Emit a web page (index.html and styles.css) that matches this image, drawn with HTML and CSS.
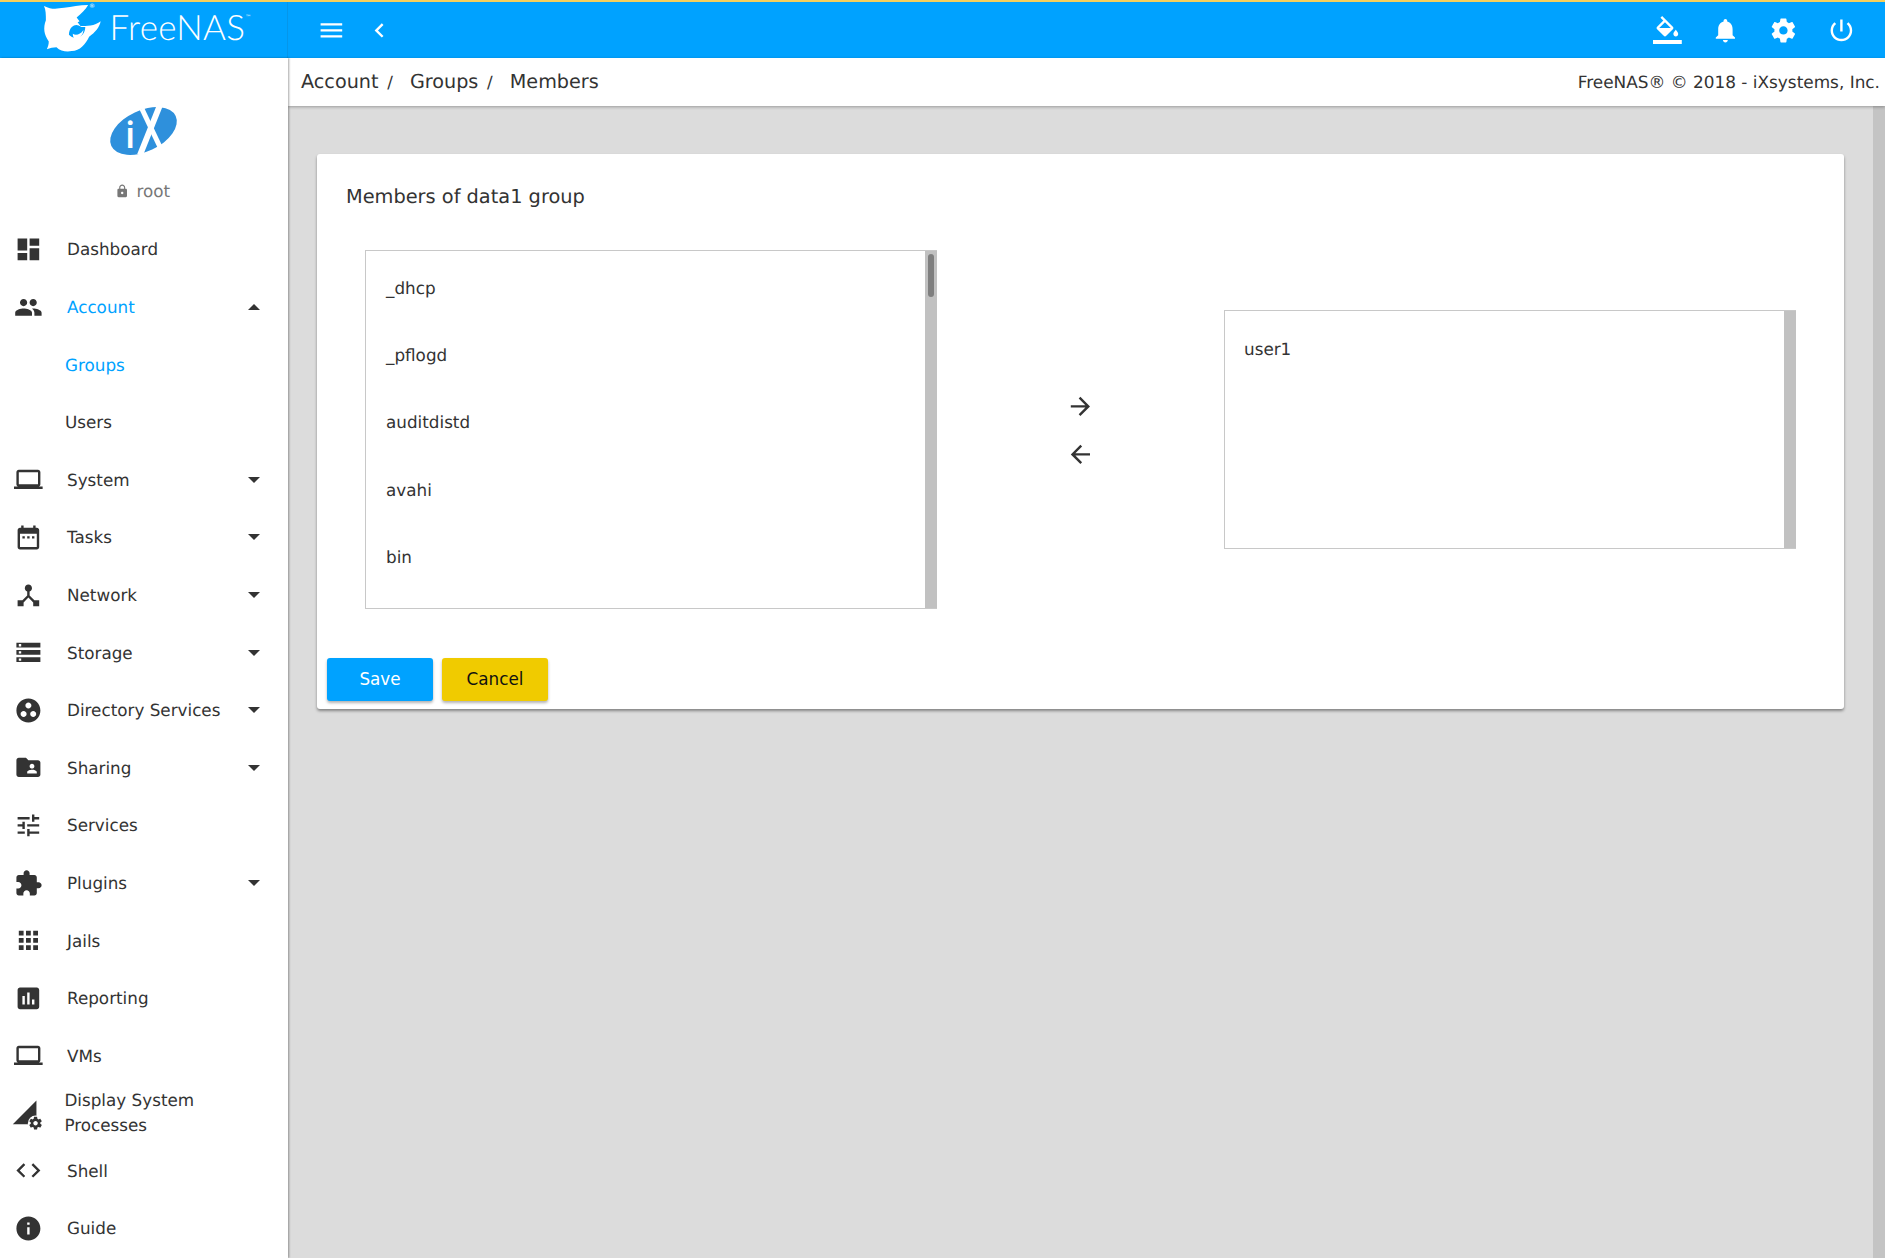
FILE: index.html
```html
<!doctype html>
<html>
<head>
    <meta charset="utf-8">
    <title>FreeNAS - Members</title>
    <link rel="stylesheet" href="styles.css">
</head>
<body>

<svg class="sprite" xmlns="http://www.w3.org/2000/svg">
    <symbol id="i-dashboard" viewBox="0 0 24 24"><path d="M3 13h8V3H3v10zm0 8h8v-6H3v6zm10 0h8V11h-8v10zm0-18v6h8V3h-8z"/></symbol>
    <symbol id="i-group" viewBox="0 0 24 24"><path d="M16 11c1.66 0 2.99-1.34 2.99-3S17.66 5 16 5c-1.66 0-3 1.34-3 3s1.34 3 3 3zm-8 0c1.66 0 2.99-1.34 2.99-3S9.66 5 8 5C6.34 5 5 6.34 5 8s1.34 3 3 3zm0 2c-2.33 0-7 1.17-7 3.5V19h14v-2.5c0-2.33-4.67-3.5-7-3.5zm8 0c-.29 0-.62.02-.97.05 1.16.84 1.97 1.97 1.97 3.45V19h6v-2.5c0-2.33-4.67-3.5-7-3.5z"/></symbol>
    <symbol id="i-laptop" viewBox="0 0 24 24"><path d="M20 18c1.1 0 1.99-.9 1.99-2L22 6c0-1.1-.9-2-2-2H4c-1.1 0-2 .9-2 2v10c0 1.1.9 2 2 2H0v2h24v-2h-4zM4 6h16v10H4V6z"/></symbol>
    <symbol id="i-date" viewBox="0 0 24 24"><path d="M9 11H7v2h2v-2zm4 0h-2v2h2v-2zm4 0h-2v2h2v-2zm2-7h-1V2h-2v2H8V2H6v2H5c-1.11 0-1.99.9-1.99 2L3 20c0 1.1.89 2 2 2h14c1.1 0 2-.9 2-2V6c0-1.1-.9-2-2-2zm0 16H5V9h14v11z"/></symbol>
    <symbol id="i-hub" viewBox="0 0 24 24"><path d="M17 16l-4-4V8.82C14.16 8.4 15 7.3 15 6c0-1.66-1.34-3-3-3S9 4.34 9 6c0 1.3.84 2.4 2 2.82V12l-4 4H3v5h5v-3.05l4-4.2 4 4.2V21h5v-5h-4z"/></symbol>
    <symbol id="i-storage" viewBox="0 0 24 24"><path d="M2 20h20v-4H2v4zm2-3h2v2H4v-2zM2 4v4h20V4H2zm4 3H4V5h2v2zm-4 7h20v-4H2v4zm2-3h2v2H4v-2z"/></symbol>
    <symbol id="i-groupwork" viewBox="0 0 24 24"><path d="M12 2C6.48 2 2 6.48 2 12s4.48 10 10 10 10-4.48 10-10S17.52 2 12 2zM8 17.5c-1.38 0-2.5-1.12-2.5-2.5s1.12-2.5 2.5-2.5 2.5 1.12 2.5 2.5-1.12 2.5-2.5 2.5zM9.5 8c0-1.38 1.12-2.5 2.5-2.5s2.5 1.12 2.5 2.5-1.12 2.5-2.5 2.5S9.5 9.38 9.5 8zm6.5 9.5c-1.38 0-2.5-1.12-2.5-2.5s1.12-2.5 2.5-2.5 2.5 1.12 2.5 2.5-1.12 2.5-2.5 2.5z"/></symbol>
    <symbol id="i-folder" viewBox="0 0 24 24"><path d="M20 6h-8l-2-2H4c-1.1 0-1.99.9-1.99 2L2 18c0 1.1.9 2 2 2h16c1.1 0 2-.9 2-2V8c0-1.1-.9-2-2-2zm-5 3c1.1 0 2 .9 2 2s-.9 2-2 2-2-.9-2-2 .9-2 2-2zm4 8h-8v-1c0-1.33 2.67-2 4-2s4 .67 4 2v1z"/></symbol>
    <symbol id="i-tune" viewBox="0 0 24 24"><path d="M3 17v2h6v-2H3zM3 5v2h10V5H3zm10 16v-2h8v-2h-8v-2h-2v6h2zM7 9v2H3v2h4v2h2V9H7zm14 4v-2H11v2h10zm-6-4h2V7h4V5h-4V3h-2v6z"/></symbol>
    <symbol id="i-extension" viewBox="0 0 24 24"><path d="M20.5 11H19V7c0-1.1-.9-2-2-2h-4V3.5C13 2.12 11.88 1 10.5 1S8 2.12 8 3.5V5H4c-1.1 0-1.99.9-1.99 2v3.8H3.5c1.49 0 2.7 1.21 2.7 2.7s-1.21 2.7-2.7 2.7H2V20c0 1.1.9 2 2 2h3.8v-1.5c0-1.49 1.21-2.7 2.7-2.7 1.49 0 2.7 1.21 2.7 2.7V22H17c1.1 0 2-.9 2-2v-4h1.5c1.38 0 2.5-1.12 2.5-2.5S21.88 11 20.5 11z"/></symbol>
    <symbol id="i-apps" viewBox="0 0 24 24"><path d="M4 8h4V4H4v4zm6 12h4v-4h-4v4zm-6 0h4v-4H4v4zm0-6h4v-4H4v4zm6 0h4v-4h-4v4zm6-10v4h4V4h-4zm-6 4h4V4h-4v4zm6 6h4v-4h-4v4zm0 6h4v-4h-4v4z"/></symbol>
    <symbol id="i-assessment" viewBox="0 0 24 24"><path d="M19 3H5c-1.1 0-2 .9-2 2v14c0 1.1.9 2 2 2h14c1.1 0 2-.9 2-2V5c0-1.1-.9-2-2-2zM9 17H7v-7h2v7zm4 0h-2V7h2v10zm4 0h-2v-4h2v4z"/></symbol>
    <symbol id="i-settings" viewBox="0 0 24 24"><path d="M19.43 12.98c.04-.32.07-.64.07-.98s-.03-.66-.07-.98l2.11-1.65c.19-.15.24-.42.12-.64l-2-3.46c-.12-.22-.39-.3-.61-.22l-2.49 1c-.52-.4-1.08-.73-1.69-.98l-.38-2.65C14.46 2.18 14.25 2 14 2h-4c-.25 0-.46.18-.49.42l-.38 2.65c-.61.25-1.17.59-1.69.98l-2.49-1c-.23-.09-.49 0-.61.22l-2 3.46c-.13.22-.07.49.12.64l2.11 1.65c-.04.32-.07.65-.07.98s.03.66.07.98l-2.11 1.65c-.19.15-.24.42-.12.64l2 3.46c.12.22.39.3.61.22l2.49-1c.52.4 1.08.73 1.69.98l.38 2.65c.03.24.24.42.49.42h4c.25 0 .46-.18.49-.42l.38-2.65c.61-.25 1.17-.59 1.69-.98l2.49 1c.23.09.49 0 .61-.22l2-3.46c.12-.22.07-.49-.12-.64l-2.11-1.65zM12 15.5c-1.93 0-3.5-1.57-3.5-3.5s1.57-3.5 3.5-3.5 3.5 1.57 3.5 3.5-1.57 3.5-3.5 3.5z"/></symbol>
    <symbol id="i-processes" viewBox="0 0 24 24" overflow="visible">
        <path d="M-1 21 18.7 1.2V21z"/>
        <circle cx="18" cy="20.2" r="6.4" fill="#fff"/>
        <g transform="translate(11.6 13.8) scale(.53)"><path d="M19.43 12.98c.04-.32.07-.64.07-.98s-.03-.66-.07-.98l2.11-1.65c.19-.15.24-.42.12-.64l-2-3.46c-.12-.22-.39-.3-.61-.22l-2.49 1c-.52-.4-1.08-.73-1.69-.98l-.38-2.65C14.46 2.18 14.25 2 14 2h-4c-.25 0-.46.18-.49.42l-.38 2.65c-.61.25-1.17.59-1.69.98l-2.49-1c-.23-.09-.49 0-.61.22l-2 3.46c-.13.22-.07.49.12.64l2.11 1.65c-.04.32-.07.65-.07.98s.03.66.07.98l-2.11 1.65c-.19.15-.24.42-.12.64l2 3.46c.12.22.39.3.61.22l2.49-1c.52.4 1.08.73 1.69.98l.38 2.65c.03.24.24.42.49.42h4c.25 0 .46-.18.49-.42l.38-2.65c.61-.25 1.17-.59 1.69-.98l2.49 1c.23.09.49 0 .61-.22l2-3.46c.12-.22.07-.49-.12-.64l-2.11-1.65zM12 15.5c-1.93 0-3.5-1.57-3.5-3.5s1.57-3.5 3.5-3.5 3.5 1.57 3.5 3.5-1.57 3.5-3.5 3.5z"/></g>
    </symbol>
    <symbol id="i-code" viewBox="0 0 24 24"><path d="M9.4 16.6L4.8 12l4.6-4.6L8 6l-6 6 6 6 1.4-1.4zm5.2 0l4.6-4.6-4.6-4.6L16 6l6 6-6 6-1.4-1.4z"/></symbol>
    <symbol id="i-info" viewBox="0 0 24 24"><path d="M12 2C6.48 2 2 6.48 2 12s4.48 10 10 10 10-4.48 10-10S17.52 2 12 2zm1 15h-2v-6h2v6zm0-8h-2V7h2v2z"/></symbol>
</svg>

<header class="topbar">
    <div class="brand">
        <svg class="shark" viewBox="0 0 64 52" xmlns="http://www.w3.org/2000/svg">
            <path d="M1 3C9 7 14 6 22 5 30 4 38 2 47 2 44 7 40 11 35 15L38 19C37 20 36 20 36 20L39 24C45 24 54 24 60 19 59 25 54 31 48 35 45 42 38 50 30 50 24 51 18 50 14 46 11 46 7 47 4 48 5 46 6 43 6 40 1 33 0 26 3 18 3 12 3 7 1 3Z" fill="#fff"/>
            <path d="M30 25C33 22 36 22 40 25L44 25C44 31 40 36 34 36 31 36 29 35 27 33 27 30 28 27 30 25Z" fill="#00a2ff"/>
            <path d="M31 32C34 34 39 33 42 28 42 33 38 37 34 37 32 37 31 35 31 32Z" fill="#fff"/>
        </svg>
        <span class="reg">®</span>
        <span class="wordmark">FreeNAS</span><span class="tm">™</span>
    </div>
    <div class="bar-left">
        <svg class="bar-icon" viewBox="0 0 24 24"><path d="M3 18h18v-2H3v2zm0-5h18v-2H3v2zm0-7v2h18V6H3z"/></svg>
        <svg class="bar-icon" viewBox="0 0 24 24"><path d="M15.41 7.41L14 6l-6 6 6 6 1.41-1.41L10.83 12z"/></svg>
    </div>
    <div class="bar-right">
        <svg class="bar-icon" viewBox="0 0 24 24"><path d="M16.56 8.94L7.62 0 6.21 1.41l2.38 2.38-5.15 5.15c-.59.59-.59 1.54 0 2.12l5.5 5.5c.29.29.68.44 1.06.44s.77-.15 1.06-.44l5.5-5.5c.59-.58.59-1.53 0-2.12zM5.21 10L10 5.21 14.79 10H5.21zM19 11.5s-2 2.17-2 3.5c0 1.1.9 2 2 2s2-.9 2-2c0-1.33-2-3.5-2-3.5z"/><path d="M0 20h24v4H0z"/></svg>
        <svg class="bar-icon" viewBox="0 0 24 24"><path d="M12 22c1.1 0 2-.9 2-2h-4c0 1.1.89 2 2 2zm6-6v-5c0-3.07-1.64-5.64-4.5-6.32V4c0-.83-.67-1.5-1.5-1.5s-1.5.67-1.5 1.5v.68C7.63 5.36 6 7.92 6 11v5l-2 2v1h16v-1l-2-2z"/></svg>
        <svg class="bar-icon" viewBox="0 0 24 24"><use href="#i-settings"/></svg>
        <svg class="bar-icon" viewBox="0 0 24 24"><path d="M13 3h-2v10h2V3zm4.83 2.17l-1.42 1.42C17.99 7.86 19 9.81 19 12c0 3.87-3.13 7-7 7s-7-3.13-7-7c0-2.19 1.01-4.14 2.58-5.42L6.17 5.17C4.23 6.82 3 9.26 3 12c0 4.97 4.03 9 9 9s9-4.03 9-9c0-2.74-1.23-5.18-3.17-6.83z"/></svg>
    </div>
</header>

<div class="shell">
    <aside class="sidebar">
        <div class="profile">
            <svg class="ix-logo" viewBox="0 0 90 75" xmlns="http://www.w3.org/2000/svg">
                <ellipse cx="43.5" cy="36" rx="35.5" ry="20.5" transform="rotate(-25 43.5 36)" fill="#2e90dc"/>
                <path d="M42 14 60 52" stroke="#fff" stroke-width="5" fill="none"/>
                <path d="M60 10 40 60" stroke="#fff" stroke-width="6" fill="none"/>
                <text class="ix-i" x="25" y="53">i</text>
            </svg>
            <div class="user">
                <svg class="lock" viewBox="0 0 24 24"><path d="M18 8h-1V6c0-2.76-2.24-5-5-5S7 3.24 7 6v2H6c-1.1 0-2 .9-2 2v10c0 1.1.9 2 2 2h12c1.1 0 2-.9 2-2V10c0-1.1-.9-2-2-2zm-6 9c-1.1 0-2-.9-2-2s.9-2 2-2 2 .9 2 2-.9 2-2 2zm3.1-9H8.9V6c0-1.71 1.39-3.1 3.1-3.1 1.71 0 3.1 1.39 3.1 3.1v2z"/></svg>
                root
            </div>
        </div>
        <nav>
            <a class="nav-item"><svg class="nav-icon"><use href="#i-dashboard"/></svg><span class="nav-label">Dashboard</span></a>
            <a class="nav-item active"><svg class="nav-icon"><use href="#i-group"/></svg><span class="nav-label">Account</span><i class="caret up"></i></a>
            <a class="nav-sub active">Groups</a>
            <a class="nav-sub">Users</a>
            <a class="nav-item"><svg class="nav-icon"><use href="#i-laptop"/></svg><span class="nav-label">System</span><i class="caret"></i></a>
            <a class="nav-item"><svg class="nav-icon"><use href="#i-date"/></svg><span class="nav-label">Tasks</span><i class="caret"></i></a>
            <a class="nav-item"><svg class="nav-icon"><use href="#i-hub"/></svg><span class="nav-label">Network</span><i class="caret"></i></a>
            <a class="nav-item"><svg class="nav-icon"><use href="#i-storage"/></svg><span class="nav-label">Storage</span><i class="caret"></i></a>
            <a class="nav-item"><svg class="nav-icon"><use href="#i-groupwork"/></svg><span class="nav-label">Directory Services</span><i class="caret"></i></a>
            <a class="nav-item"><svg class="nav-icon"><use href="#i-folder"/></svg><span class="nav-label">Sharing</span><i class="caret"></i></a>
            <a class="nav-item"><svg class="nav-icon"><use href="#i-tune"/></svg><span class="nav-label">Services</span></a>
            <a class="nav-item"><svg class="nav-icon"><use href="#i-extension"/></svg><span class="nav-label">Plugins</span><i class="caret"></i></a>
            <a class="nav-item"><svg class="nav-icon"><use href="#i-apps"/></svg><span class="nav-label">Jails</span></a>
            <a class="nav-item"><svg class="nav-icon"><use href="#i-assessment"/></svg><span class="nav-label">Reporting</span></a>
            <a class="nav-item"><svg class="nav-icon"><use href="#i-laptop"/></svg><span class="nav-label">VMs</span></a>
            <a class="nav-item wrap"><svg class="nav-icon"><use href="#i-processes"/></svg><span class="nav-label">Display System Processes</span></a>
            <a class="nav-item"><svg class="nav-icon"><use href="#i-code"/></svg><span class="nav-label">Shell</span></a>
            <a class="nav-item"><svg class="nav-icon"><use href="#i-info"/></svg><span class="nav-label">Guide</span></a>
        </nav>
    </aside>

    <div class="main">
        <div class="crumbs">
            <div class="crumb-path">
                <a>Account</a><span class="sep">/</span>
                <a>Groups</a><span class="sep">/</span>
                <a>Members</a>
            </div>
            <div class="copyright">FreeNAS® © 2018 - iXsystems, Inc.</div>
        </div>
        <div class="scroller">
            <main class="content">
                <section class="card">
                    <h2 class="card-title">Members of data1 group</h2>
                    <div class="picker">
                        <div class="listbox tall">
                            <ul class="options">
                                <li>_dhcp</li>
                                <li>_pflogd</li>
                                <li>auditdistd</li>
                                <li>avahi</li>
                                <li>bin</li>
                            </ul>
                            <div class="track"><div class="thumb"></div></div>
                        </div>
                        <div class="arrows">
                            <svg class="arrow" viewBox="0 0 24 24"><path d="M12 4l-1.41 1.41L16.17 11H4v2h12.17l-5.58 5.59L12 20l8-8z"/></svg>
                            <svg class="arrow" viewBox="0 0 24 24"><path d="M20 11H7.83l5.59-5.59L12 4l-8 8 8 8 1.41-1.41L7.83 13H20v-2z"/></svg>
                        </div>
                        <div class="listbox short">
                            <ul class="options">
                                <li>user1</li>
                            </ul>
                            <div class="track"></div>
                        </div>
                    </div>
                    <div class="actions">
                        <button class="btn primary">Save</button>
                        <button class="btn accent">Cancel</button>
                    </div>
                </section>
            </main>
            <div class="page-track"></div>
        </div>
    </div>
</div>

</body>
</html>
```

FILE: styles.css
```css
html, body { height: 100%; margin: 0; overflow: hidden; }
body {
    display: flex; flex-direction: column;
    font-family: "DejaVu Sans", sans-serif;
    font-size: 16.8px;
    text-rendering: geometricPrecision;
    color: #333;
    background: #dcdcdc;
}
.sprite { display: none; }
ul { list-style: none; margin: 0; padding: 0; }

/* top bar */
.topbar {
    display: flex; align-items: center; flex: none;
    height: 56px;
    border-top: 2px solid #f5cf5c;
    background: #00a2ff;
    color: #fff;
}
.brand {
    display: flex; align-items: center; position: relative;
    width: 288px; height: 100%; flex: none; box-sizing: border-box;
    padding-left: 43px;
    border-right: 1px solid #0596ea;
}
.shark { width: 61.5px; height: 50px; margin-top: -4px; }
.reg { position: absolute; left: 89px; top: 1px; font-size: 6px; }
.wordmark {
    margin-left: 5px; margin-top: -6px;
    font-family: Lato, sans-serif; font-weight: 300;
    font-size: 35px; letter-spacing: .3px;
}
.tm { font-size: 6px; align-self: flex-start; margin-top: 12px; }
.bar-icon { width: 28.8px; height: 28.8px; fill: #fff; }
.bar-left { display: flex; gap: 19.4px; padding-left: 28.6px; }
.bar-right { display: flex; gap: 29px; margin-left: auto; padding-right: 29.4px; }

.shell { display: flex; flex: 1; min-height: 0; }

/* side menu */
.sidebar {
    width: 288px; flex: none; position: relative; z-index: 2;
    background: #fff;
    box-shadow: 1px 0 2px rgba(0,0,0,.35);
    overflow: hidden;
}
.profile { height: 162.6px; box-sizing: border-box; padding-top: 37px; text-align: center; }
.ix-logo { display: block; width: 90px; height: 75px; margin: 0 0 0 100px; }
.ix-i { font-family: "Open Sans", sans-serif; font-size: 37px; font-weight: 600; fill: #fff; }
.user { color: #777; font-size: 16.8px; margin-top: 11px; padding-right: 3px; }
.lock { width: 14.4px; height: 14.4px; fill: #777; vertical-align: -1px; margin-right: 2px; }
.nav-item, .nav-sub {
    display: flex; align-items: center;
    height: 57.6px;
    box-sizing: border-box;
}
.nav-item { padding-left: 13.6px; padding-right: 28px; }
.nav-sub { padding-left: 65px; }
.nav-icon { width: 28.8px; height: 28.8px; flex: none; fill: #333; overflow: visible; }
.nav-label { margin-left: 24.6px; flex: 1; }
.wrap .nav-label { margin-left: 22px; line-height: 25px; padding-right: 40px; }
.active { color: #00a2ff; }
.active .nav-icon { fill: #333; }
.caret {
    width: 0; height: 0; flex: none;
    border-left: 6px solid transparent;
    border-right: 6px solid transparent;
    border-top: 6px solid #333;
}
.caret.up { border-top: 0; border-bottom: 6px solid #333; }

/* breadcrumb strip */
.main { flex: 1; min-width: 0; display: flex; flex-direction: column; }
.crumbs {
    display: flex; align-items: center; justify-content: space-between; flex: none;
    height: 48px; box-sizing: border-box;
    padding: 0 5px 2px 13px;
    background: #fff;
    box-shadow: 0 1px 3px rgba(0,0,0,.3);
    position: relative; z-index: 1;
    font-size: 19.2px;
}
.sep { margin: 0 11px 0 8.7px; font-size: 16.8px; }
.copyright { font-size: 16.9px; padding-top: 1px; }

.scroller { flex: 1; display: flex; min-height: 0; }
.content { flex: 1; padding: 48px 29px 0; min-width: 0; }
.page-track { width: 12px; background: #c4c4c4; flex: none; }

.card {
    height: 555px; box-sizing: border-box;
    background: #fff;
    border-radius: 3px;
    box-shadow: 0 2px 3px rgba(0,0,0,.4);
    padding-top: 29px;
    display: flex; flex-direction: column;
}
.card-title {
    margin: 0 0 0 29px;
    font-size: 19.35px; font-weight: 400; line-height: 28px; height: 67px;
}
.picker { display: flex; align-items: center; padding: 0 48px; }
.listbox {
    display: flex; width: 572px; box-sizing: border-box;
    border: 1px solid #c8c8c8; border-right: 0;
}
.tall { height: 359px; }
.short { height: 239px; }
.options { flex: 1; padding-top: 4px; }
.options li { height: 67.2px; line-height: 67.2px; padding-left: 20px; }
.short .options { padding-top: 3px; }
.short .options li { height: 70px; line-height: 70px; padding-left: 19px; }
.track { width: 12px; background: #c1c1c1; position: relative; }
.thumb {
    position: absolute; left: 3px; top: 3px;
    width: 6px; height: 43px;
    border-radius: 3px;
    background: #7f7f7f;
}
.arrows { flex: 1; display: flex; flex-direction: column; align-items: center; gap: 19px; padding-top: 2px; }
.arrow { width: 28.8px; height: 28.8px; fill: #333; }

.actions { display: flex; gap: 9px; padding: 48.5px 0 0 10px; }
.btn {
    width: 106px; height: 43px;
    border: 0; border-radius: 3px;
    font: inherit;
    box-shadow: 0 2px 3px rgba(0,0,0,.3);
}
.primary { background: #00a2ff; color: #fff; }
.accent { background: #f0cb00; color: #111; }
```
